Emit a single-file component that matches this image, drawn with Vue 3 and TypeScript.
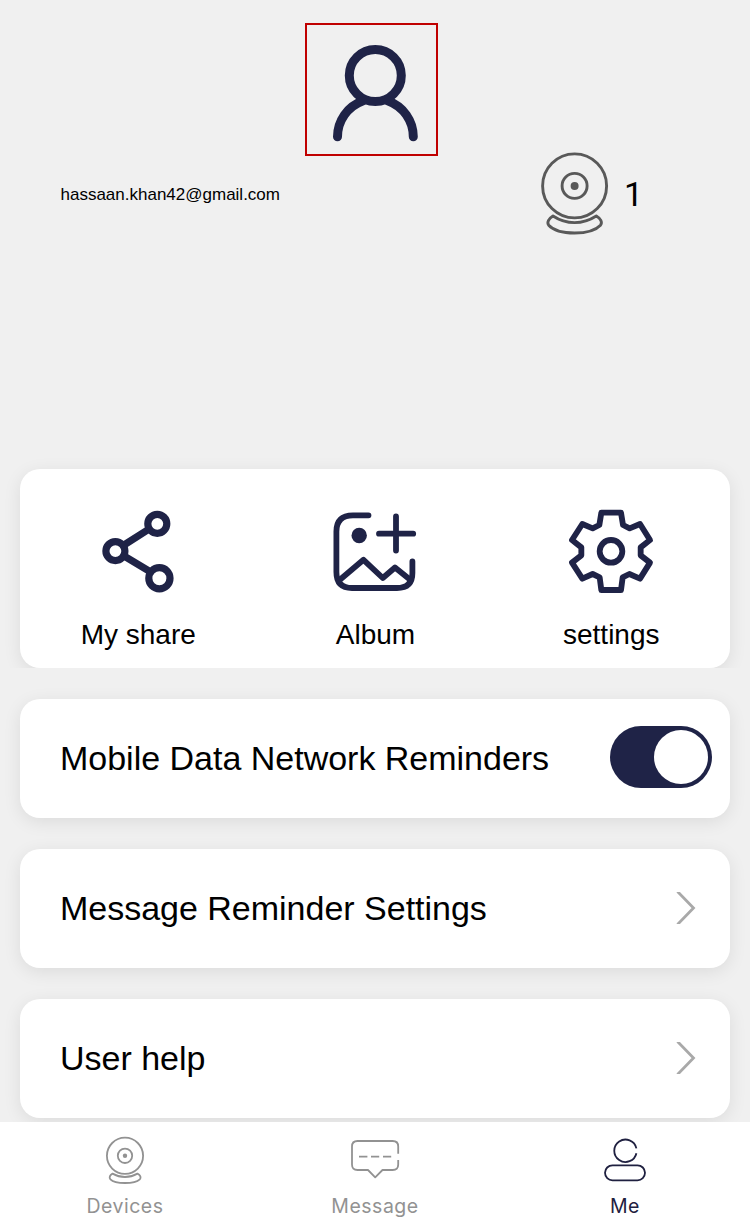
<script setup lang="ts">
import { ref } from 'vue'

const email = 'hassaan.khan42@gmail.com'
const deviceCount = 1
const reminders = ref(true)
const links: string[] = ['Message Reminder Settings', 'User help']
</script>

<template>
  <div class="screen">
    <header class="profile">
      <div class="avatar">
        <svg viewBox="307 25 129 129" width="129" height="129" class="ink" stroke-width="9">
          <circle cx="375.3" cy="75.5" r="26" />
          <path d="M337.5 136.8A38.2 38.2 0 0 1 362.5 101M413.3 136.8A38.2 38.2 0 0 0 388.3 101" />
        </svg>
      </div>
      <div class="account">
        <span class="email">{{ email }}</span>
        <div class="devices">
          <svg viewBox="540 150 70 87" width="70" height="87" class="camera">
            <circle cx="574.6" cy="185.9" r="32" />
            <circle cx="574.6" cy="185.9" r="12.5" />
            <circle cx="574.6" cy="185.9" r="4" class="dot" />
            <path d="M553 216Q563 222.6 574.6 222.6Q586 222.6 596.3 216C600.5 218.5 602.8 222 600.5 225.2C595 231 585 233 574.6 233C563 233 554 231 548.7 225.2C546.5 222 549 218.5 553 216Z" />
          </svg>
          <span class="count">{{ deviceCount }}</span>
        </div>
      </div>
      <nav class="card shortcuts">
        <div class="shortcut">
          <svg viewBox="92 506 92 90" width="92" height="90" class="ink" stroke-width="7.2">
            <path d="M123 545.6L149.5 528.8M123 555.4L150.5 571.8" stroke-linecap="butt" />
            <circle cx="157.3" cy="523.8" r="9.5" />
            <circle cx="115.4" cy="551.1" r="9.5" />
            <circle cx="159.4" cy="578.3" r="10.6" />
          </svg>
          <span>My share</span>
        </div>
        <div class="shortcut">
          <svg viewBox="329 506 92 90" width="92" height="90" class="ink" stroke-width="5.8">
            <path d="M368.5 515.3H353Q336.4 515.3 336.4 531.5V572Q336.4 588 352 588H397Q412.4 588 412.4 573V561.5" />
            <path d="M396 516.5V550.5M379 533.7H413.2" />
            <path d="M339 580.5L363.5 559.8L382.8 578L395 567.5L410.5 580" />
            <circle cx="359.2" cy="535.5" r="7.7" class="fill" />
          </svg>
          <span class="nudge">Album</span>
        </div>
        <div class="shortcut">
          <svg viewBox="60 48 276 270" width="92" height="90" class="ink" stroke-width="17.5">
            <path d="M169 68H228L234 105L254 115L285 102L315 150L287 172V196L315 218L285 266L253 252L233 262L228 300H169L164 262L143 252L112 266L81 218L109 196V172L81 150L112 102L143 115L163 105Z" />
            <circle cx="198" cy="184" r="34" />
          </svg>
          <span>settings</span>
        </div>
      </nav>
    </header>

    <main class="rows">
      <div class="card row">
        <span>Mobile Data Network Reminders</span>
        <button class="toggle" :class="{ on: reminders }" aria-label="Mobile Data Network Reminders" @click="reminders = !reminders">
          <i class="knob"></i>
        </button>
      </div>
      <div v-for="link in links" :key="link" class="card row">
        <span>{{ link }}</span>
        <svg viewBox="0 0 20 32" width="20" height="32" class="chevron">
          <path d="M1.5 -0.5L17.5 16L1.5 32.5" />
        </svg>
      </div>
    </main>

    <footer class="tabs">
      <div class="tab">
        <svg viewBox="100 1132 50 54" width="50" height="54" class="line">
          <circle cx="125" cy="1155.8" r="18.1" />
          <circle cx="125" cy="1155.8" r="7.2" />
          <circle cx="125" cy="1155.8" r="2.2" class="dot" />
          <path d="M112.5 1173.6Q118.5 1177 125 1177Q131.5 1177 137.5 1173.6C140.5 1175 141.4 1177.6 139.8 1179.3C137 1182 131 1183 125 1183C119 1183 113 1182 110.4 1179.3C108.8 1177.6 109.8 1175 112.5 1173.6Z" />
        </svg>
        <span>Devices</span>
      </div>
      <div class="tab">
        <svg viewBox="350 1132 50 54" width="50" height="54" class="line">
          <path d="M398.2 1153.8V1146.5Q398.2 1141 392.7 1141H357.5Q352 1141 352 1146.5V1164.5Q352 1170 357.5 1170H368L375.2 1177.4L382.5 1170H392.7Q398.2 1170 398.2 1164.5V1160" />
          <path d="M359 1156.6H367.4M371 1156.6H379.2M383 1156.6H391.2" />
        </svg>
        <span>Message</span>
      </div>
      <div class="tab active">
        <svg viewBox="600 1132 50 54" width="50" height="54" class="line">
          <path d="M636.4 1148.4A11.2 11.2 0 1 0 636.4 1153.2" />
          <rect x="605" y="1165.3" width="40" height="15" rx="7.5" />
        </svg>
        <span>Me</span>
      </div>
    </footer>
  </div>
</template>

<style>
body {
  background: #f0f0f0;
}
</style>

<style scoped>
.screen {
  width: 750px;
  height: 1220px;
  display: flex;
  flex-direction: column;
  overflow: hidden;
  background: #f0f0f0;
  color: #000;
  font-family: "Liberation Sans", Arial, sans-serif;
}
svg {
  display: block;
  fill: none;
  flex: none;
}
.profile {
  height: 668px;
  box-sizing: border-box;
  padding: 23px 20px 0;
  display: flex;
  flex-direction: column;
  overflow: hidden;
  flex: none;
}
.avatar {
  width: 129px;
  height: 129px;
  margin-left: 285px;
  border: 2px solid #c00000;
  flex: none;
}
.ink {
  stroke: #1f2347;
  stroke-linecap: round;
  stroke-linejoin: round;
}
.ink .fill {
  fill: #1f2347;
  stroke: none;
}
.account {
  display: flex;
  justify-content: space-between;
  align-items: center;
  height: 87px;
  margin-top: -6px;
  padding: 0 90px 0 40px;
}
.email {
  padding: 2px 0 0 0.5px;
  font-size: 17px;
}
.devices {
  display: flex;
  align-items: center;
  gap: 14px;
}
.count {
  width: 16px;
  font-family: Roboto, sans-serif;
  font-size: 34px;
}
.camera {
  stroke: #595959;
  stroke-width: 2.9;
  stroke-linejoin: round;
}
.camera .dot {
  fill: #595959;
  stroke: none;
}
.card {
  background: #fff;
  border-radius: 20px;
  box-shadow: 0 4px 18px rgba(0, 0, 0, 0.085);
}
.shortcuts {
  height: 199px;
  margin-top: auto;
  display: grid;
  grid-template-columns: repeat(3, 236.5px);
  flex: none;
}
.shortcut {
  display: flex;
  flex-direction: column;
  align-items: center;
  padding-top: 37px;
  font-size: 28px;
}
.shortcut span {
  margin-top: 23px;
  line-height: 32px;
}
.shortcut .nudge {
  padding-left: 1.5px;
}
.rows {
  flex: 1;
  min-height: 0;
  padding: 31px 20px 0;
  display: flex;
  flex-direction: column;
  gap: 31px;
}
.row {
  height: 119px;
  flex: none;
  box-sizing: border-box;
  padding: 0 34px 0 40px;
  display: flex;
  align-items: center;
  justify-content: space-between;
  font-size: 34px;
  letter-spacing: -0.01px;
}
.toggle {
  width: 102px;
  height: 62px;
  margin: 0 -16px 3px 0;
  padding: 4px;
  border: 0;
  border-radius: 31px;
  background: #c8c8cc;
  display: flex;
  align-items: center;
}
.toggle.on {
  background: #1f2347;
  justify-content: flex-end;
}
.knob {
  width: 54px;
  height: 54px;
  border-radius: 50%;
  background: #fff;
}
.chevron {
  margin-bottom: 1px;
  stroke: #a9a9a9;
  stroke-width: 2.8;
}
.tabs {
  height: 98px;
  flex: none;
  position: relative;
  background: #fff;
  display: grid;
  grid-template-columns: repeat(3, 1fr);
}
.tab {
  display: flex;
  flex-direction: column;
  align-items: center;
  padding-top: 10px;
  color: #929292;
  font-family: Inter, sans-serif;
  font-size: 19.5px;
  letter-spacing: 0.5px;
}
.tab span {
  margin-top: 8px;
  line-height: 24px;
}
.tab.active {
  color: #1f2040;
}
.line {
  stroke: currentColor;
  stroke-width: 1.8;
  stroke-linejoin: round;
}
.line .dot {
  fill: currentColor;
  stroke: none;
}
</style>
